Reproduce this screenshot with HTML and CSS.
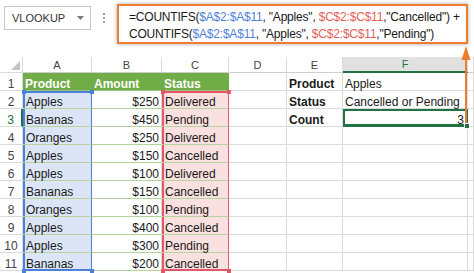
FILE: index.html
```html
<!DOCTYPE html>
<html lang="en">
<head>
    <meta charset="UTF-8">
    <meta name="viewport" content="width=device-width, initial-scale=1.0">
    <title>COUNTIFS with OR logic</title>
    <link rel="stylesheet" href="styles.css">
</head>
<body>
    <div class="toolbar">
        <div class="name-box">
            <span>VLOOKUP</span>
            <svg class="caret" width="7" height="4" viewBox="0 0 7 4"><polygon points="0,0 7,0 3.5,4" fill="#7a7a7a"/></svg>
        </div>
        <div class="grip"><i></i><i></i><i></i></div>
        <div class="formula">
            <div>=COUNTIFS(<span class="ref-a">$A$2:$A$11</span>, "Apples", <span class="ref-c">$C$2:$C$11</span>,"Cancelled") +</div>
            <div>COUNTIFS(<span class="ref-a">$A$2:$A$11</span>, "Apples", <span class="ref-c">$C$2:$C$11</span>,"Pending")</div>
        </div>
    </div>

    <div class="sheet">
        <div class="corner"><svg width="9" height="9" viewBox="0 0 9 9"><polygon points="9,0 9,9 0,9" fill="#c4c4c4"/></svg></div>
        <div class="hd">A</div><div class="hd">B</div><div class="hd">C</div><div class="hd">D</div><div class="hd">E</div><div class="hd cur-col">F</div><div class="hd"></div>

        <div class="rn">1</div><div class="th">Product</div><div class="th">Amount</div><div class="th">Status</div><div></div><div class="b">Product</div><div>Apples</div><div></div>
        <div class="rn">2</div><div class="tb ra top">Apples</div><div class="tb num">$250</div><div class="tb rc top">Delivered</div><div></div><div class="b">Status</div><div>Cancelled or Pending</div><div></div>
        <div class="rn cur-row">3</div><div class="tb ra">Bananas</div><div class="tb num">$450</div><div class="tb rc">Pending</div><div></div><div class="b">Count</div><div class="num sel">3</div><div></div>
        <div class="rn">4</div><div class="tb ra">Oranges</div><div class="tb num">$250</div><div class="tb rc">Delivered</div><div></div><div></div><div></div><div></div>
        <div class="rn">5</div><div class="tb ra">Apples</div><div class="tb num">$150</div><div class="tb rc">Cancelled</div><div></div><div></div><div></div><div></div>
        <div class="rn">6</div><div class="tb ra">Apples</div><div class="tb num">$100</div><div class="tb rc">Delivered</div><div></div><div></div><div></div><div></div>
        <div class="rn">7</div><div class="tb ra">Bananas</div><div class="tb num">$150</div><div class="tb rc">Cancelled</div><div></div><div></div><div></div><div></div>
        <div class="rn">8</div><div class="tb ra">Oranges</div><div class="tb num">$100</div><div class="tb rc">Pending</div><div></div><div></div><div></div><div></div>
        <div class="rn">9</div><div class="tb ra">Apples</div><div class="tb num">$400</div><div class="tb rc">Cancelled</div><div></div><div></div><div></div><div></div>
        <div class="rn">10</div><div class="tb ra">Apples</div><div class="tb num">$300</div><div class="tb rc">Pending</div><div></div><div></div><div></div><div></div>
        <div class="rn">11</div><div class="tb ra bot">Bananas</div><div class="tb num">$200</div><div class="tb rc bot">Cancelled</div><div></div><div></div><div></div><div></div>
    </div>

    <!-- callout from the result cell up to the formula bar -->
    <svg class="arrow" width="10" height="80" viewBox="0 0 10 80">
        <polygon points="5,1 0.5,15 9.5,15" fill="#ed7d31"/>
        <rect x="4" y="12" width="2" height="66" fill="#ed7d31"/>
    </svg>
</body>
</html>
```

FILE: styles.css
```css
body {
    margin: 0;
    width: 474px;
    height: 273px;
    overflow: hidden;
    position: relative;
    background: #fff;
    font-family: "Liberation Sans", Arial, sans-serif;
    color: #1a1a1a;
}

/* formula bar */
.toolbar {
    display: flex;
    align-items: flex-start;
    height: 57px;
    padding: 4px 6px 0 4px;
    box-sizing: border-box;
}
.name-box {
    margin-top: 2px;
    width: 87px;
    height: 24px;
    box-sizing: border-box;
    border: 1px solid #c6c6c6;
    display: flex;
    align-items: center;
    justify-content: space-between;
    padding: 0 6px 0 7px;
    font-size: 11px;
    color: #333;
}
.grip {
    width: 26px;
    margin-top: 9px;
    display: flex;
    flex-direction: column;
    align-items: center;
    gap: 2px;
}
.grip i {
    display: block;
    width: 2px;
    height: 2px;
    background: #a0a0a0;
}
.formula {
    flex: 1;
    height: 40px;
    box-sizing: border-box;
    border: 2px solid #ed7d31;
    box-shadow: 0 0 4px rgba(0,0,0,0.35);
    padding: 3px 0 0 10px;
    font-size: 12px;
    line-height: 17px;
    letter-spacing: -0.2px;
    white-space: nowrap;
    overflow: hidden;
}
.ref-a { color: #4f81d6; }
.ref-c { color: #e35f5c; }

/* worksheet */
.sheet {
    display: grid;
    grid-template-columns: 23px 69px 70px 67px 58px 56px 125px 1fr;
    grid-template-rows: 16px;
    grid-auto-rows: 18px;
    font-size: 12px;
}
.sheet > div {
    box-sizing: border-box;
    border-right: 1px solid #dadada;
    border-bottom: 1px solid #dadada;
    padding: 0 2px;
    line-height: 12px;
    display: flex;
    align-items: flex-end;
    white-space: nowrap;
}
.sheet > .corner {
    justify-content: flex-end;
    padding: 0 2px 2px 0;
}
.sheet > .hd {
    justify-content: center;
    align-items: center;
    font-size: 11px;
    color: #444;
    border-bottom-color: #cfcfcf;
}
.sheet > .cur-col {
    background: #e1e1e1;
    color: #217346;
    border-bottom: 2px solid #217346;
}
.sheet > .rn {
    justify-content: center;
    color: #444;
}
.sheet > .cur-row {
    color: #217346;
    border-right: 2px solid #217346;
}
.sheet > .th {
    background: #70ad47;
    color: #fff;
    font-weight: bold;
    border-right-color: #70ad47;
    border-bottom-color: #9cc47e;
}
.sheet > .tb { border-bottom-color: #b6d39d; }
.sheet > .num {
    justify-content: flex-end;
    padding-right: 2px;
}
.sheet > .b { font-weight: bold; }

/* highlighted formula ranges */
.sheet > .ra {
    background: #dbe5f5;
    border-right-color: #4a7fda;
    box-shadow: inset 2px 0 #4a7fda;
    padding-left: 3px;
}
.sheet > .rc {
    background: #fbe0e0;
    border-right-color: #e4566a;
    box-shadow: inset 2px 0 #e4566a;
    padding-left: 3px;
}
.sheet > .ra.top { box-shadow: inset 2px 0 #4a7fda, inset 0 2px #4a7fda; }
.sheet > .rc.top { box-shadow: inset 2px 0 #e4566a, inset 0 2px #e4566a; }
.sheet > .ra.bot { box-shadow: inset 2px 0 #4a7fda, inset 0 -1px #4a7fda; border-bottom-color: #4a7fda; }
.sheet > .rc.bot { box-shadow: inset 2px 0 #e4566a, inset 0 -1px #e4566a; border-bottom-color: #e4566a; }

.top, .bot, .sel { position: relative; }
.top::before, .top::after,
.bot::before, .bot::after {
    content: "";
    position: absolute;
    width: 4px;
    height: 4px;
    z-index: 1;
}
.top::before { top: -1px; left: -1px; }
.top::after { top: -1px; right: -3px; }
.bot::before { bottom: -3px; left: -1px; }
.bot::after { bottom: -3px; right: -3px; }
.ra::before, .ra::after { background: #4a7fda; }
.rc::before, .rc::after { background: #e4566a; }

/* active cell */
.sheet > .sel {
    box-shadow: inset 0 0 0 2px #217346;
    border-right-color: #217346;
    border-bottom-color: #217346;
    padding-right: 3px;
}
.sel::after {
    content: "";
    position: absolute;
    right: -3px;
    bottom: -3px;
    width: 4px;
    height: 4px;
    background: #217346;
    border: 1px solid #fff;
    z-index: 1;
}

.arrow {
    position: absolute;
    left: 461px;
    top: 45px;
}
```
